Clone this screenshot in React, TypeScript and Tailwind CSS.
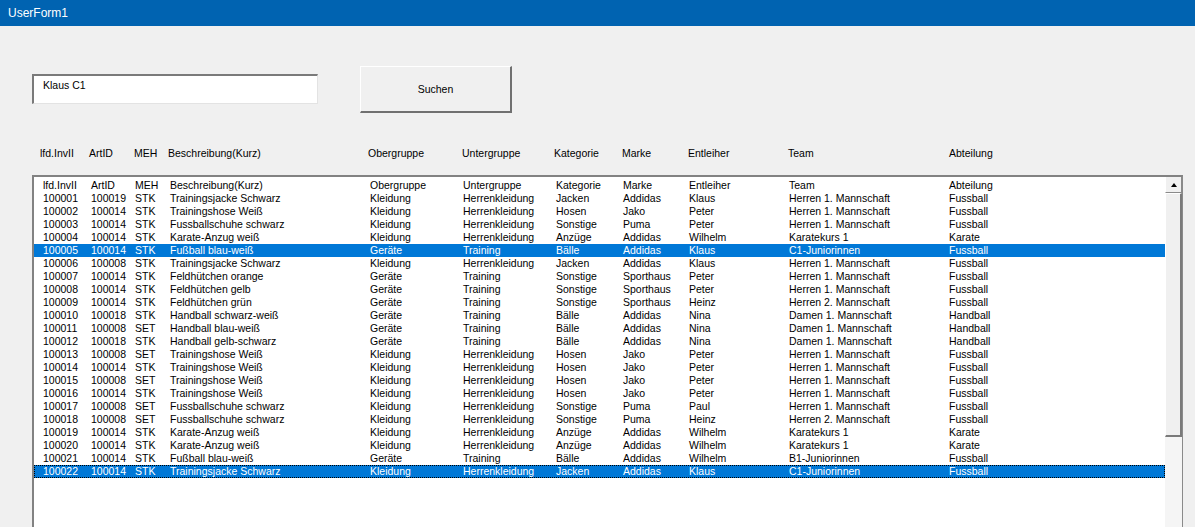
import React from "react";

// Spaltenbreiten der Liste (Datenzeilen) und der Überschriften darüber
const listCols = [
    "w-[48px]",
    "w-[44px]",
    "w-[35px]",
    "w-[200px]",
    "w-[93px]",
    "w-[93px]",
    "w-[67px]",
    "w-[66px]",
    "w-[100px]",
    "w-[160px]",
    "w-[120px]",
];

const labelCols = [
    "w-[49px]",
    "w-[45px]",
    "w-[34px]",
    "w-[200px]",
    "w-[94px]",
    "w-[92px]",
    "w-[68px]",
    "w-[66px]",
    "w-[100px]",
    "w-[161px]",
    "w-[120px]",
];

const heads = [
    "lfd.InvII",
    "ArtID",
    "MEH",
    "Beschreibung(Kurz)",
    "Obergruppe",
    "Untergruppe",
    "Kategorie",
    "Marke",
    "Entleiher",
    "Team",
    "Abteilung",
];

const rows: string[][] = [
    heads,
    ["100001", "100019", "STK", "Trainingsjacke Schwarz", "Kleidung", "Herrenkleidung", "Jacken", "Addidas", "Klaus", "Herren 1. Mannschaft", "Fussball"],
    ["100002", "100014", "STK", "Trainingshose Weiß", "Kleidung", "Herrenkleidung", "Hosen", "Jako", "Peter", "Herren 1. Mannschaft", "Fussball"],
    ["100003", "100014", "STK", "Fussballschuhe schwarz", "Kleidung", "Herrenkleidung", "Sonstige", "Puma", "Peter", "Herren 1. Mannschaft", "Fussball"],
    ["100004", "100014", "STK", "Karate-Anzug weiß", "Kleidung", "Herrenkleidung", "Anzüge", "Addidas", "Wilhelm", "Karatekurs 1", "Karate"],
    ["100005", "100014", "STK", "Fußball blau-weiß", "Geräte", "Training", "Bälle", "Addidas", "Klaus", "C1-Juniorinnen", "Fussball"],
    ["100006", "100008", "STK", "Trainingsjacke Schwarz", "Kleidung", "Herrenkleidung", "Jacken", "Addidas", "Klaus", "Herren 1. Mannschaft", "Fussball"],
    ["100007", "100014", "STK", "Feldhütchen orange", "Geräte", "Training", "Sonstige", "Sporthaus", "Peter", "Herren 1. Mannschaft", "Fussball"],
    ["100008", "100014", "STK", "Feldhütchen gelb", "Geräte", "Training", "Sonstige", "Sporthaus", "Peter", "Herren 1. Mannschaft", "Fussball"],
    ["100009", "100014", "STK", "Feldhütchen grün", "Geräte", "Training", "Sonstige", "Sporthaus", "Heinz", "Herren 2. Mannschaft", "Fussball"],
    ["100010", "100018", "STK", "Handball schwarz-weiß", "Geräte", "Training", "Bälle", "Addidas", "Nina", "Damen 1. Mannschaft", "Handball"],
    ["100011", "100008", "SET", "Handball blau-weiß", "Geräte", "Training", "Bälle", "Addidas", "Nina", "Damen 1. Mannschaft", "Handball"],
    ["100012", "100018", "STK", "Handball gelb-schwarz", "Geräte", "Training", "Bälle", "Addidas", "Nina", "Damen 1. Mannschaft", "Handball"],
    ["100013", "100008", "SET", "Trainingshose Weiß", "Kleidung", "Herrenkleidung", "Hosen", "Jako", "Peter", "Herren 1. Mannschaft", "Fussball"],
    ["100014", "100014", "STK", "Trainingshose Weiß", "Kleidung", "Herrenkleidung", "Hosen", "Jako", "Peter", "Herren 1. Mannschaft", "Fussball"],
    ["100015", "100008", "SET", "Trainingshose Weiß", "Kleidung", "Herrenkleidung", "Hosen", "Jako", "Peter", "Herren 1. Mannschaft", "Fussball"],
    ["100016", "100014", "STK", "Trainingshose Weiß", "Kleidung", "Herrenkleidung", "Hosen", "Jako", "Peter", "Herren 1. Mannschaft", "Fussball"],
    ["100017", "100008", "SET", "Fussballschuhe schwarz", "Kleidung", "Herrenkleidung", "Sonstige", "Puma", "Paul", "Herren 1. Mannschaft", "Fussball"],
    ["100018", "100008", "SET", "Fussballschuhe schwarz", "Kleidung", "Herrenkleidung", "Sonstige", "Puma", "Heinz", "Herren 2. Mannschaft", "Fussball"],
    ["100019", "100014", "STK", "Karate-Anzug weiß", "Kleidung", "Herrenkleidung", "Anzüge", "Addidas", "Wilhelm", "Karatekurs 1", "Karate"],
    ["100020", "100014", "STK", "Karate-Anzug weiß", "Kleidung", "Herrenkleidung", "Anzüge", "Addidas", "Wilhelm", "Karatekurs 1", "Karate"],
    ["100021", "100014", "STK", "Fußball blau-weiß", "Geräte", "Training", "Bälle", "Addidas", "Wilhelm", "B1-Juniorinnen", "Fussball"],
    ["100022", "100014", "STK", "Trainingsjacke Schwarz", "Kleidung", "Herrenkleidung", "Jacken", "Addidas", "Klaus", "C1-Juniorinnen", "Fussball"],
];

// markierte Zeilen (Index in rows)
const selected = [5, 22];
const focused = 22;

export default function App() {
    return (
        <div className="h-[527px] w-[1195px] overflow-hidden bg-[#f0f0f0] font-['Liberation_Sans',Arial,sans-serif] text-black">
            {/* Titelleiste */}
            <div className="flex h-[26px] items-center bg-[#0063b1] pl-[8px] pb-[1px] text-[12px] text-white">
                UserForm1
            </div>

            <div className="flex flex-col pl-[32px]">
                {/* Suchfeld + Button */}
                <div className="mt-[40px] flex items-start">
                    <div className="mt-[8px] flex h-[30px] w-[286px] items-start border-t-2 border-l-2 border-r border-b border-t-[#7a7a7a] border-l-[#7a7a7a] border-r-[#e3e3e3] border-b-[#e3e3e3] bg-white pl-[9px] pt-[3px] text-[10.5px] leading-[13px]">
                        Klaus C1
                    </div>
                    <button className="ml-[42px] flex h-[47px] w-[152px] items-center justify-center border-t border-l border-r-2 border-b-2 border-t-white border-l-white border-r-[#707070] border-b-[#707070] bg-[#f0f0f0] pt-[2px] text-[10.5px]">
                        Suchen
                    </button>
                </div>

                {/* Spaltenüberschriften */}
                <div className="mt-[34px] flex h-[13px] items-center pl-[8px] text-[10.5px] leading-[13px] whitespace-nowrap">
                    {heads.map((h, i) => (
                        <div key={i} className={labelCols[i]}>
                            {h}
                        </div>
                    ))}
                </div>

                {/* Listbox */}
                <div className="mt-[15px] flex h-[360px] w-[1151px] border-t-2 border-l-2 border-r border-t-[#828282] border-l-[#828282] border-r-[#8a8a8a] bg-white">
                    <div className="flex flex-1 flex-col pt-[2px] text-[10.5px] leading-[13px] whitespace-nowrap">
                        {rows.map((r, ri) => {
                            const sel = selected.includes(ri);
                            return (
                                <div
                                    key={ri}
                                    className={
                                        "flex h-[13px] items-center pl-[9px] " +
                                        (sel ? "bg-[#0078d7] text-white " : "") +
                                        (ri === focused ? "outline outline-1 -outline-offset-1 outline-dotted outline-black" : "")
                                    }
                                >
                                    {r.map((c, ci) => (
                                        <div key={ci} className={listCols[ci]}>
                                            {c}
                                        </div>
                                    ))}
                                </div>
                            );
                        })}
                    </div>

                    {/* Scrollleiste */}
                    <div className="flex w-[17px] flex-col">
                        <div className="flex h-[16px] items-center justify-center border-l border-b border-r border-l-white border-b-[#8a8a8a] border-r-[#8a8a8a] bg-[#f0f0f0]">
                            <div className="h-0 w-0 border-x-[3.5px] border-b-[4px] border-x-transparent border-b-black" />
                        </div>
                        <div className="h-[244px] border-t border-l border-r-2 border-b-2 border-t-white border-l-white border-r-[#7a7a7a] border-b-[#7a7a7a] bg-[#f0f0f0]" />
                        <div className="flex-1 bg-[#f5f5f5]" />
                    </div>
                </div>
            </div>
        </div>
    );
}
